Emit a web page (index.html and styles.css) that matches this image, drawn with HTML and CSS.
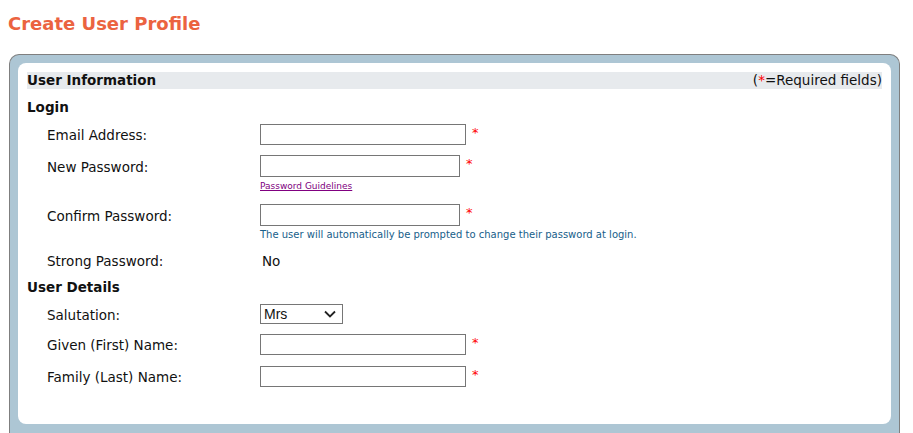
FILE: index.html
```html
<!DOCTYPE html>
<html>
<head>
<meta charset="utf-8">
<link rel="stylesheet" href="styles.css">
</head>
<body>
<h1 class="page-title">Create User Profile</h1>
<div class="panel">
  <div class="panel-inner">
    <div class="bar">
      <span class="bar-title">User Information</span>
      <span class="bar-note">(<span class="req">*</span>=Required fields)</span>
    </div>

    <div class="section">Login</div>

    <div class="row row-email">
      <div class="label h21">Email Address:</div>
      <div class="field">
        <div class="inline"><input class="text w206 h21" type="text"><span class="req star">*</span></div>
      </div>
    </div>

    <div class="row row-newpw">
      <div class="label h22">New Password:</div>
      <div class="field">
        <div class="inline"><input class="text w200 h22" type="password"><span class="req star">*</span></div>
        <a class="guide" href="#">Password Guidelines</a>
      </div>
    </div>

    <div class="row row-confirm">
      <div class="label h22">Confirm Password:</div>
      <div class="field">
        <div class="inline"><input class="text w200 h22" type="password"><span class="req star">*</span></div>
        <div class="help">The user will automatically be prompted to change their password at login.</div>
      </div>
    </div>

    <div class="row row-strong">
      <div class="label h16">Strong Password:</div>
      <div class="field"><div class="value">No</div></div>
    </div>

    <div class="section section-details">User Details</div>

    <div class="row row-sal">
      <div class="label h20">Salutation:</div>
      <div class="field">
        <div class="select">
          <span class="select-text">Mrs</span>
          <svg class="chev" width="12" height="8" viewBox="0 0 12 8"><path d="M1 1.5 L6 6.5 L11 1.5" fill="none" stroke="#222" stroke-width="1.8"/></svg>
        </div>
      </div>
    </div>

    <div class="row row-given">
      <div class="label h21">Given (First) Name:</div>
      <div class="field">
        <div class="inline"><input class="text w206 h21" type="text"><span class="req star">*</span></div>
      </div>
    </div>

    <div class="row row-family">
      <div class="label h21">Family (Last) Name:</div>
      <div class="field">
        <div class="inline"><input class="text w206 h21" type="text"><span class="req star">*</span></div>
      </div>
    </div>
  </div>
</div>
</body>
</html>
```

FILE: styles.css
```css
html, body {
  margin: 0;
  padding: 0;
  background: #ffffff;
}
body {
  padding: 0 8px 0 8px;
  font-family: "DejaVu Sans", Verdana, sans-serif;
  font-size: 13.5px;
  color: #111;
}
.page-title {
  margin: 13px 0 19px 0;
  font-size: 18px;
  line-height: 22px;
  font-weight: bold;
  color: #eb6340;
}
.panel {
  margin-left: 1px;
  width: 873px;
  border: 1px solid #7f7f7f;
  border-bottom: none;
  border-radius: 10px 10px 0 0;
  background: #adc6d4;
  padding: 8px 8px 20px 8px;
}
.panel-inner {
  background: #fff;
  border-radius: 8px;
  padding: 9px 9px 37px 9px;
}
.bar {
  display: flex;
  justify-content: space-between;
  background: #e7eaed;
  height: 17px;
  line-height: 17px;
}
.bar-title {
  font-weight: bold;
}
.req {
  color: #ff0000;
}
.section {
  font-weight: bold;
  line-height: 16px;
  height: 16px;
  padding-top: 1px;
  margin-top: 9px;
}
.section-details {
  margin-top: 9px;
}
.row {
  display: grid;
  grid-template-columns: 213px 1fr;
  padding-left: 20px;
}
.label {
  display: flex;
  align-items: center;
  padding-top: 1px;
  box-sizing: border-box;
}
.h21 { height: 21px; }
.h22 { height: 22px; }
.h20 { height: 20px; }
.h16 { height: 16px; padding-top: 0; }
.row-email { margin-top: 9px; }
.row-newpw { margin-top: 10px; }
.row-confirm { margin-top: 11px; }
.row-strong { margin-top: 11px; }
.row-sal { margin-top: 9px; }
.row-given { margin-top: 10px; }
.row-family { margin-top: 11px; }
.field {
  display: flex;
  flex-direction: column;
  align-items: flex-start;
}
.inline {
  display: flex;
  align-items: flex-start;
}
.text {
  box-sizing: border-box;
  margin: 0;
  border: 1px solid #767676;
  background: #fff;
  padding: 0 3px;
  border-radius: 0;
  outline: none;
}
.w206 { width: 206px; }
.w200 { width: 200px; }
.star {
  margin-left: 6px;
  font-size: 13px;
  line-height: 13px;
  margin-top: 2px;
}
.guide {
  margin-top: 2px;
  font-size: 9px;
  line-height: 14px;
  color: #800080;
  text-decoration: underline;
}
.help {
  margin-top: 2px;
  font-size: 10px;
  line-height: 14px;
  color: #17608a;
}
.value {
  line-height: 16px;
  padding-left: 2px;
}
.select {
  box-sizing: border-box;
  width: 83px;
  height: 20px;
  border: 1px solid #767676;
  display: flex;
  align-items: center;
  justify-content: space-between;
  padding: 0 6px 0 3px;
  font-family: "Liberation Sans", Arial, sans-serif;
  font-size: 14px;
  color: #111;
}
.chev {
  display: block;
}
```
